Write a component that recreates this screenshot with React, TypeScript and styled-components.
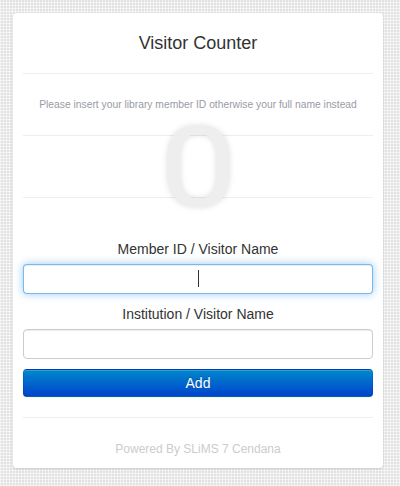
import React from "react";
import styled, { createGlobalStyle } from "styled-components";

const GlobalStyle = createGlobalStyle`
	html, body {
		margin: 0;
		padding: 0;
	}
	body {
		min-height: 486px;
		font-family: "Liberation Sans", Arial, sans-serif;
		background-color: #e2e2e2;
		background-image:
			linear-gradient(90deg, rgba(255, 255, 255, 0.55) 1px, transparent 1px),
			linear-gradient(0deg, rgba(255, 255, 255, 0.55) 1px, transparent 1px);
		background-size: 3px 3px;
		padding: 13px 0 0 13px;
		box-sizing: border-box;
	}
`;

const App: React.FC = () => {
	return (
		<>
			<GlobalStyle />
			<Card>
				<Title>Visitor Counter</Title>
				<Rule />
				<Info>Please insert your library member ID otherwise your full name instead</Info>
				<Rule />
				<Counter>
					<Count>0</Count>
				</Counter>
				<Rule />
				<Form>
					<Label>Member ID / Visitor Name</Label>
					<InputWrap>
						<Input type="text" focused />
						<Caret />
					</InputWrap>
					<Label second>Institution / Visitor Name</Label>
					<InputWrap>
						<Input type="text" />
					</InputWrap>
					<Button type="button">Add</Button>
				</Form>
				<Rule />
				<Footer>Powered By SLiMS 7 Cendana</Footer>
			</Card>
		</>
	);
};

export default App;

const Card = styled.div`
	width: 370px;
	height: 455px;
	box-sizing: border-box;
	padding: 0 10px;
	background-color: #ffffff;
	border-radius: 4px;
	box-shadow: 0 1px 3px rgba(0, 0, 0, 0.12);
	display: flex;
	flex-direction: column;
`;

const Title = styled.div`
	padding: 20px 0 20px;
	font-size: 18px;
	line-height: 20px;
	color: #333333;
	text-align: center;
`;

const Rule = styled.div`
	height: 1px;
	background-color: #eeeeee;
	flex-shrink: 0;
`;

const Info = styled.div`
	padding: 25px 0 24px;
	font-size: 10.3px;
	line-height: 12px;
	color: #999ba3;
	text-align: center;
	white-space: nowrap;
`;

const Counter = styled.div`
	height: 61px;
	display: flex;
	justify-content: center;
	position: relative;
	z-index: 1;
`;

const Count = styled.div`
	font-family: Roboto, "Liberation Sans", Arial, sans-serif;
	font-size: 112px;
	line-height: 61px;
	padding-top: 1px;
	font-weight: normal;
	color: #eeeeee;
	text-shadow: 0 0 6px rgba(0, 0, 0, 0.15);
	transform: scaleX(1.22);
`;

const Form = styled.div`
	padding: 41px 0 20px;
	display: flex;
	flex-direction: column;
`;

const Label = styled.div<{ second?: boolean }>`
	font-size: 14px;
	line-height: 20px;
	color: #333333;
	text-align: center;
	margin-top: ${(props) => (props.second ? "10px" : "0")};
	margin-bottom: 5px;
`;

const InputWrap = styled.div`
	position: relative;
`;

const Input = styled.input<{ focused?: boolean }>`
	display: block;
	width: 100%;
	height: 30px;
	box-sizing: border-box;
	margin: 0;
	padding: 4px 6px;
	font-family: "Liberation Sans", Arial, sans-serif;
	font-size: 14px;
	text-align: center;
	background-color: #ffffff;
	border-radius: 4px;
	outline: none;
	border: 1px solid ${(props) => (props.focused ? "rgba(82, 168, 236, 0.8)" : "#cccccc")};
	box-shadow: ${(props) =>
		props.focused
			? "inset 0 1px 1px rgba(0, 0, 0, 0.075), 0 0 8px rgba(82, 168, 236, 0.6)"
			: "inset 0 1px 1px rgba(0, 0, 0, 0.075)"};
`;

const Caret = styled.span`
	position: absolute;
	left: 175px;
	top: 6px;
	width: 1px;
	height: 17px;
	background-color: #333333;
`;

const Button = styled.button`
	margin-top: 10px;
	height: 28px;
	width: 100%;
	border-radius: 4px;
	border: 1px solid #0044cc;
	border-color: rgba(0, 0, 0, 0.1) rgba(0, 0, 0, 0.1) rgba(0, 0, 0, 0.25);
	background-color: #0055cc;
	background-image: linear-gradient(to bottom, #0088cc, #0044cc);
	color: #ffffff;
	font-family: "Liberation Sans", Arial, sans-serif;
	font-size: 14px;
	line-height: 20px;
	text-shadow: 0 -1px 0 rgba(0, 0, 0, 0.25);
	box-shadow: inset 0 1px 0 rgba(255, 255, 255, 0.2), 0 1px 2px rgba(0, 0, 0, 0.05);
	cursor: pointer;
`;

const Footer = styled.div`
	padding-top: 23px;
	font-size: 12px;
	line-height: 16px;
	color: #cccccc;
	text-align: center;
`;
